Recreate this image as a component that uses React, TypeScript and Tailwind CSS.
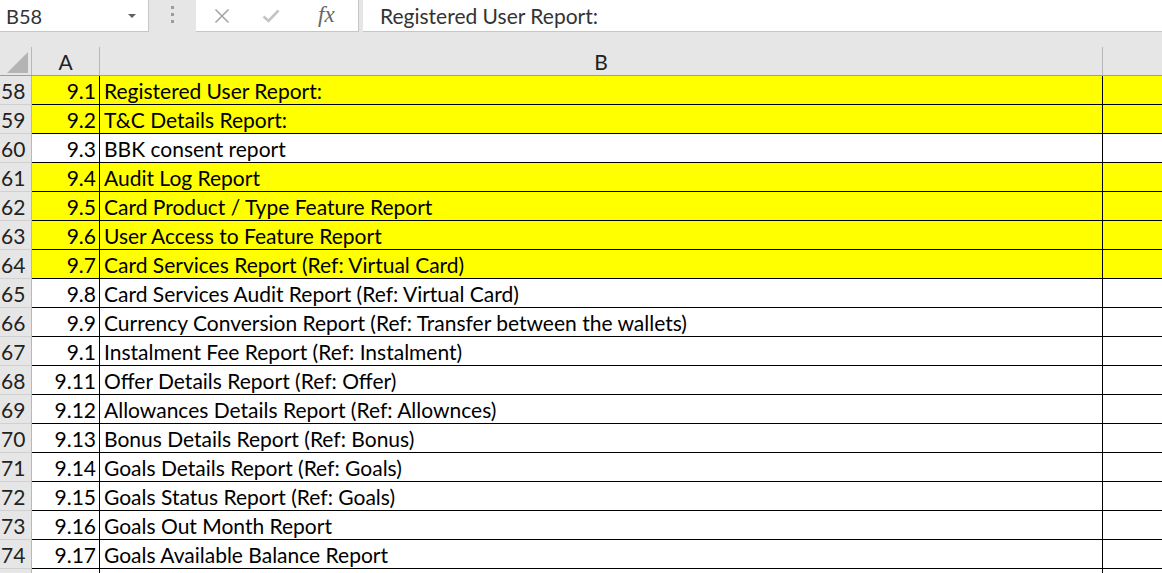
const rows: [number, string, string, boolean][] = [
  [58, '9.1', 'Registered User Report:', true],
  [59, '9.2', 'T&C Details Report:', true],
  [60, '9.3', 'BBK consent report', false],
  [61, '9.4', 'Audit Log Report', true],
  [62, '9.5', 'Card Product / Type Feature Report', true],
  [63, '9.6', 'User Access to Feature Report', true],
  [64, '9.7', 'Card Services Report (Ref: Virtual Card)', true],
  [65, '9.8', 'Card Services Audit Report (Ref: Virtual Card)', false],
  [66, '9.9', 'Currency Conversion Report (Ref: Transfer between the wallets)', false],
  [67, '9.1', 'Instalment Fee Report (Ref: Instalment)', false],
  [68, '9.11', 'Offer Details Report (Ref: Offer)', false],
  [69, '9.12', 'Allowances Details Report (Ref: Allownces)', false],
  [70, '9.13', 'Bonus Details Report (Ref: Bonus)', false],
  [71, '9.14', 'Goals Details Report (Ref: Goals)', false],
  [72, '9.15', 'Goals Status Report (Ref: Goals)', false],
  [73, '9.16', 'Goals Out Month Report', false],
  [74, '9.17', 'Goals Available Balance Report', false],
];

function FormulaBar() {
  return (
    <div className="flex h-[47px] bg-[#e6e6e6]">
      <div className="flex h-[32px] w-[149px] items-center justify-between border-r border-b border-[#c6c6c6] bg-white pl-[6px] pr-[12px]">
        <span className="text-[20px] text-[#333]">B58</span>
        <svg width="8" height="5" viewBox="0 0 8 5" className="mt-[1px]">
          <path d="M0 0 L8 0 L4 4 Z" fill="#606060" />
        </svg>
      </div>
      <div className="flex w-[47px] flex-col items-center gap-[4px] pt-[6px]">
        <div className="h-[3px] w-[3px] bg-[#9c9c9c]" />
        <div className="h-[3px] w-[3px] bg-[#9c9c9c]" />
        <div className="h-[3px] w-[3px] bg-[#9c9c9c]" />
      </div>
      <div className="flex h-[32px] w-[163px] items-center border-r border-b border-[#c6c6c6] bg-white">
        <svg width="16" height="16" viewBox="0 0 16 16" className="ml-[18px]">
          <path d="M1.5 1.5 L14.5 14.5 M14.5 1.5 L1.5 14.5" stroke="#a6a6a6" strokeWidth="1.6" />
        </svg>
        <svg width="18" height="14" viewBox="0 0 18 14" className="ml-[32px]">
          <path d="M1.5 7.5 L6.5 12 L16.5 1.5" stroke="#c4c4c4" strokeWidth="2.6" fill="none" />
        </svg>
        <span className="ml-[38px] font-['Liberation_Serif'] text-[23px] italic text-[#666]">fx</span>
      </div>
      <div className="ml-[4px] flex h-[32px] flex-1 items-center border-b border-[#c6c6c6] bg-white pl-[17px]">
        <span className="text-[21px] text-[#333]">Registered User Report:</span>
      </div>
    </div>
  );
}

function HeaderRow() {
  return (
    <div className="flex h-[29px] border-b border-[#9e9e9e] bg-[#e6e6e6]">
      <div className="relative w-[32px] shrink-0 border-r border-[#b8b8b8]">
        <svg width="21" height="21" viewBox="0 0 21 21" className="absolute left-[7px] top-[5px]">
          <path d="M21 0 L21 21 L0 21 Z" fill="#b4b4b4" />
        </svg>
      </div>
      <div className="flex w-[68px] shrink-0 items-center justify-center border-r border-[#b8b8b8] pt-[2px] text-[21px] text-[#222]">A</div>
      <div className="flex w-[1003px] shrink-0 items-center justify-center border-r border-[#b8b8b8] pt-[2px] text-[21px] text-[#222]">B</div>
      <div className="flex-1" />
    </div>
  );
}

export default function App() {
  return (
    <div className="h-[573px] w-[1162px] overflow-hidden bg-white font-['Lato',sans-serif]">
      <FormulaBar />
      <HeaderRow />
      {rows.map(([n, num, label, hi]) => (
        <div key={n} className={`flex h-[29px] ${hi ? 'bg-[#ffff00]' : 'bg-white'}`}>
          <div className="flex w-[32px] shrink-0 items-center border-r border-b border-r-[#b8b8b8] border-b-[#d0d0d0] bg-[#e6e6e6] pl-[1px] pt-[1px] text-[21px] text-[#222]">
            {n}
          </div>
          <div className="flex w-[68px] shrink-0 items-center justify-end border-r border-b border-black pr-[3px] pt-[1px] text-[21px] text-black">
            {num}
          </div>
          <div className="flex w-[1003px] shrink-0 items-center border-r border-b border-black pl-[4px] pt-[1px] text-[21px] whitespace-nowrap text-black">
            {label}
          </div>
          <div className="flex-1 border-b border-black" />
        </div>
      ))}
      <div className="flex h-[29px] bg-white">
        <div className="w-[32px] shrink-0 border-r border-[#b8b8b8] bg-[#e6e6e6]" />
        <div className="w-[68px] shrink-0 border-r border-black" />
        <div className="w-[1003px] shrink-0 border-r border-black" />
      </div>
    </div>
  );
}
